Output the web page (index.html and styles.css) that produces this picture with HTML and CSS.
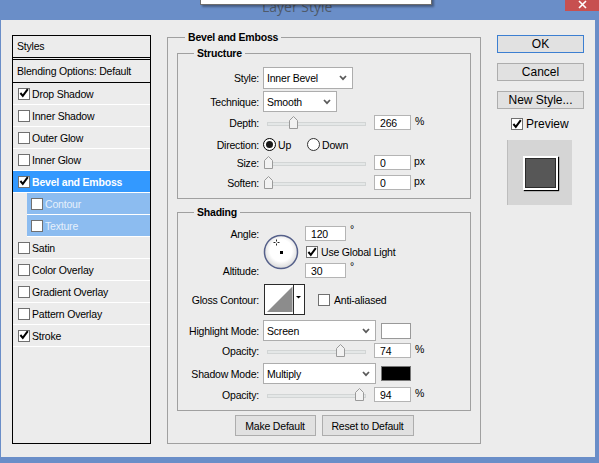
FILE: index.html
```html
<!DOCTYPE html>
<html>
<head>
    <meta charset="utf-8">
    <title>Layer Style</title>
    <link rel="stylesheet" href="styles.css">
</head>
<body>
    <!-- Title bar -->
    <div class="titlebar">
        <span class="title">Layer Style</span>
        <div class="tip"></div>
        <div class="close">
            <svg width="9" height="9" viewBox="0 0 9 9"><path d="M1 1 L8 8 M8 1 L1 8" stroke="#fff" stroke-width="1.6"/></svg>
        </div>
    </div>

    <div class="dialog">
        <!-- Styles list -->
        <div class="styles-list">
            <div class="list-head">Styles</div>
            <div class="list-blend">Blending Options: Default</div>
            <div class="list-item"><span class="chk"><svg viewBox="0 0 10 10"><path d="M1.4 5 L3.8 7.8 L8.8 1.2"/></svg></span>Drop Shadow</div>
            <div class="list-item"><span class="chk"></span>Inner Shadow</div>
            <div class="list-item"><span class="chk"></span>Outer Glow</div>
            <div class="list-item"><span class="chk"></span>Inner Glow</div>
            <div class="list-item active"><span class="chk"><svg viewBox="0 0 10 10"><path d="M1.4 5 L3.8 7.8 L8.8 1.2"/></svg></span>Bevel and Emboss</div>
            <div class="list-item sub"><span class="chk"></span>Contour</div>
            <div class="list-item sub"><span class="chk"></span>Texture</div>
            <div class="list-item"><span class="chk"></span>Satin</div>
            <div class="list-item"><span class="chk"></span>Color Overlay</div>
            <div class="list-item"><span class="chk"></span>Gradient Overlay</div>
            <div class="list-item"><span class="chk"></span>Pattern Overlay</div>
            <div class="list-item"><span class="chk"><svg viewBox="0 0 10 10"><path d="M1.4 5 L3.8 7.8 L8.8 1.2"/></svg></span>Stroke</div>
        </div>

        <!-- Bevel and Emboss settings -->
        <fieldset class="group">
            <legend>Bevel and Emboss</legend>

            <fieldset class="sub-group structure">
                <legend>Structure</legend>
                <div class="row r-style">
                    <span class="lbl">Style:</span>
                    <div class="select w-style"><span>Inner Bevel</span><svg width="8" height="6" viewBox="0 0 8 6"><path d="M1 1 L4 4.2 L7 1"/></svg></div>
                </div>
                <div class="row r-tech">
                    <span class="lbl">Technique:</span>
                    <div class="select w-tech"><span>Smooth</span><svg width="8" height="6" viewBox="0 0 8 6"><path d="M1 1 L4 4.2 L7 1"/></svg></div>
                </div>
                <div class="row r-depth">
                    <span class="lbl">Depth:</span>
                    <div class="slider"><div class="track"></div><svg class="thumb" style="left: 26px" width="9" height="13" viewBox="0 0 9 13"><path d="M0.5 4.5 L4.5 0.5 L8.5 4.5 V12.5 H0.5 Z"/></svg></div>
                    <div class="num">266</div><span class="unit">%</span>
                </div>
                <div class="row r-dir">
                    <span class="lbl">Direction:</span>
                    <span class="opt"><span class="radio on"><span class="dot"></span></span>Up</span>
                    <span class="opt"><span class="radio"></span>Down</span>
                </div>
                <div class="row r-size">
                    <span class="lbl">Size:</span>
                    <div class="slider"><div class="track"></div><svg class="thumb" style="left: 1px" width="9" height="13" viewBox="0 0 9 13"><path d="M0.5 4.5 L4.5 0.5 L8.5 4.5 V12.5 H0.5 Z"/></svg></div>
                    <div class="num">0</div><span class="unit px">px</span>
                </div>
                <div class="row r-soften">
                    <span class="lbl">Soften:</span>
                    <div class="slider"><div class="track"></div><svg class="thumb" style="left: 1px" width="9" height="13" viewBox="0 0 9 13"><path d="M0.5 4.5 L4.5 0.5 L8.5 4.5 V12.5 H0.5 Z"/></svg></div>
                    <div class="num">0</div><span class="unit px">px</span>
                </div>
            </fieldset>

            <fieldset class="sub-group shading">
                <legend>Shading</legend>
                <div class="angle">
                    <span class="lbl a-lbl1">Angle:</span>
                    <svg class="dial" width="36" height="36" viewBox="0 0 36 36">
                        <defs>
                            <radialGradient id="dialFill" cx="50%" cy="45%" r="55%">
                                <stop offset="0.6" stop-color="#ffffff"/>
                                <stop offset="1" stop-color="#d8d8d8"/>
                            </radialGradient>
                        </defs>
                        <circle cx="18" cy="18" r="16.5" fill="url(#dialFill)" stroke="#55608a" stroke-width="1.5"/>
                        <path d="M13.5 5.5 V7.5 M13.5 9.5 V11.5 M10.5 8.5 H12.5 M14.5 8.5 H16.5" stroke="#222" stroke-width="1"/>
                        <rect x="17" y="17" width="3" height="3" fill="#000"/>
                    </svg>
                    <div class="a-val1"><div class="num w-angle">120</div><span class="deg">°</span></div>
                    <div class="a-glob"><span class="chk"><svg viewBox="0 0 10 10"><path d="M1.4 5 L3.8 7.8 L8.8 1.2"/></svg></span>Use Global Light</div>
                    <span class="lbl a-lbl3">Altitude:</span>
                    <div class="a-val3"><div class="num w-angle">30</div><span class="deg">°</span></div>
                </div>
                <div class="row r-gloss">
                    <span class="lbl">Gloss Contour:</span>
                    <svg class="contour" width="41" height="31" viewBox="0 0 41 31">
                        <rect x="0.5" y="0.5" width="40" height="30" fill="#fff" stroke="#2b2b2b"/>
                        <polygon points="3,28 28.5,2.5 28.5,28" fill="#8c8c8c"/>
                        <path d="M29.5 1 V30" stroke="#2b2b2b"/>
                        <polygon points="32,12 37,12 34.5,14.6" fill="#000"/>
                    </svg>
                    <span class="chk anti"></span>Anti-aliased
                </div>
                <div class="row r-hmode">
                    <span class="lbl">Highlight Mode:</span>
                    <div class="select w-mode"><span>Screen</span><svg width="8" height="6" viewBox="0 0 8 6"><path d="M1 1 L4 4.2 L7 1"/></svg></div>
                    <span class="swatch white"></span>
                </div>
                <div class="row r-hop">
                    <span class="lbl">Opacity:</span>
                    <div class="slider"><div class="track"></div><svg class="thumb" style="left: 73px" width="9" height="13" viewBox="0 0 9 13"><path d="M0.5 4.5 L4.5 0.5 L8.5 4.5 V12.5 H0.5 Z"/></svg></div>
                    <div class="num">74</div><span class="unit">%</span>
                </div>
                <div class="row r-smode">
                    <span class="lbl">Shadow Mode:</span>
                    <div class="select w-mode"><span>Multiply</span><svg width="8" height="6" viewBox="0 0 8 6"><path d="M1 1 L4 4.2 L7 1"/></svg></div>
                    <span class="swatch black"></span>
                </div>
                <div class="row r-sop">
                    <span class="lbl">Opacity:</span>
                    <div class="slider"><div class="track"></div><svg class="thumb" style="left: 92px" width="9" height="13" viewBox="0 0 9 13"><path d="M0.5 4.5 L4.5 0.5 L8.5 4.5 V12.5 H0.5 Z"/></svg></div>
                    <div class="num">94</div><span class="unit">%</span>
                </div>
            </fieldset>

            <div class="defaults">
                <button class="btn-sm make">Make Default</button>
                <button class="btn-sm reset">Reset to Default</button>
            </div>
        </fieldset>

        <!-- Dialog buttons -->
        <div class="actions">
            <button class="btn ok">OK</button>
            <button class="btn">Cancel</button>
            <button class="btn">New Style...</button>
            <div class="preview-check"><span class="chk"><svg viewBox="0 0 10 10"><path d="M1.4 5 L3.8 7.8 L8.8 1.2"/></svg></span>Preview</div>
            <div class="preview-box"><div class="preview-square"></div></div>
        </div>
    </div>
</body>
</html>
```

FILE: styles.css
```css
* {
    box-sizing: border-box;
}

body {
    margin: 0;
    width: 599px;
    height: 463px;
    overflow: hidden;
    background: #6a8ec8;
    font-family: "Liberation Sans", Arial, sans-serif;
    font-size: 10.5px;
    letter-spacing: -0.2px;
    color: #000;
}

/* Title bar */
.titlebar {
    position: relative;
    height: 20px;
    display: flex;
    align-items: flex-start;
}

.title {
    margin-left: 262px;
    font-family: "Open Sans", sans-serif;
    font-size: 14px;
    line-height: 14px;
    letter-spacing: 0;
    color: #4f5a6a;
}

.tip {
    position: absolute;
    left: 200px;
    top: -5px;
    width: 232px;
    height: 10px;
    background: #fff;
    border: 1px solid #6d6d6d;
    box-shadow: 2px 2px 2px rgba(0, 0, 0, 0.35);
}

.close {
    margin-left: auto;
    width: 34px;
    height: 11px;
    background: #c75050;
    display: flex;
    justify-content: center;
    align-items: flex-end;
    padding-bottom: 2px;
}

/* Dialog body */
.dialog {
    margin-left: 1px;
    width: 594px;
    height: 437px;
    background: #ececec;
    display: flex;
    align-items: flex-start;
}

/* Checkboxes */
.chk {
    width: 12px;
    height: 12px;
    flex: none;
    border: 1px solid #707070;
    background: #fff;
    display: flex;
    align-items: center;
    justify-content: center;
    margin-right: 2px;
}

.chk svg {
    width: 10px;
    height: 10px;
    margin-top: -1px;
}

.chk path {
    fill: none;
    stroke: #000;
    stroke-width: 2;
}

/* Styles list */
.styles-list {
    margin: 15px 0 0 11px;
    width: 139px;
    height: 409px;
    border: 1px solid #000;
}

.list-head {
    height: 24px;
    line-height: 21px;
    padding-left: 4px;
    border-bottom: 3px double #000;
}

.list-blend {
    height: 23px;
    line-height: 22px;
    padding-left: 4px;
    border-bottom: 1px solid #000;
}

.list-item {
    height: 22px;
    display: flex;
    align-items: center;
    padding-left: 5px;
    border-bottom: 1px solid #fff;
}

.list-item.active {
    background: #3399ff;
    color: #fff;
    font-weight: bold;
}

.list-item.sub {
    margin-left: 14px;
    padding-left: 4px;
    background: #8cbcf0;
    color: #e6f0fb;
}

/* Fieldsets */
fieldset {
    margin: 0;
    min-width: 0;
}

legend {
    padding: 0 3px;
    font-weight: bold;
    line-height: 14px;
}

.group {
    margin: 10px 0 0 16px;
    width: 314px;
    padding: 2px 9px 7px;
    border: 1px solid #a0a0a0;
}

.group > legend {
    margin-left: 8px;
}

.sub-group {
    padding: 0 0 8px;
    border: 1px solid #a0a0a0;
}

.sub-group > legend {
    margin-left: 16px;
}

.shading {
    margin-top: 6px;
    padding-bottom: 8px;
}

.row {
    display: flex;
    align-items: center;
}

.lbl {
    width: 81px;
    margin-right: 4px;
    flex: none;
    text-align: right;
}

/* Selects */
.select {
    display: flex;
    align-items: center;
    justify-content: space-between;
    height: 22px;
    padding: 0 5px 0 3px;
    background: #fff;
    border: 1px solid #adadad;
}

.select path {
    fill: none;
    stroke: #5a5a5a;
    stroke-width: 1.7;
}

.w-style { width: 90px; }
.w-tech { width: 74px; height: 21px; }
.w-mode { width: 113px; height: 21px; }

/* Sliders */
.slider {
    position: relative;
    width: 104px;
    height: 15px;
    flex: none;
}

.track {
    margin: 7px 0 0 4px;
    width: 99px;
    height: 4px;
    background: #e4e7e7;
    border: 1px solid #d2d5d5;
}

.thumb {
    position: absolute;
    top: 1px;
}

.thumb path {
    fill: #f2f2f2;
    stroke: #9a9a9a;
}

/* Number fields */
.num {
    width: 37px;
    height: 15px;
    margin-left: 7px;
    padding-left: 5px;
    line-height: 14px;
    background: #fff;
    border: 1px solid #b4b4b4;
}

.unit {
    margin-left: 4px;
    align-self: flex-start;
    line-height: 12px;
}

.unit.px {
    margin-left: 3px;
}

/* Structure rows */
.r-style { margin-top: 7px; }
.r-tech { margin-top: 2px; }
.r-depth { margin-top: 3px; }
.r-dir { margin-top: 8px; }
.r-size { margin-top: 4px; }
.r-soften { margin-top: 5px; }

.opt {
    display: flex;
    align-items: center;
    margin-right: 16px;
}

.radio {
    width: 13px;
    height: 13px;
    margin-right: 2px;
    border-radius: 50%;
    border: 1px solid #333;
    background: #fff;
    display: flex;
    align-items: center;
    justify-content: center;
}

.radio.on {
    border-color: #000;
}

.dot {
    width: 7px;
    height: 7px;
    border-radius: 50%;
    background: #1a1a1a;
}

/* Shading: angle block */
.angle {
    display: grid;
    grid-template-columns: 85px 42px auto;
    grid-template-rows: 19px 18px 19px;
    margin-top: 5px;
}

.angle .lbl {
    margin-right: 0;
    padding-right: 4px;
    width: 85px;
    align-self: center;
}

.a-lbl1 { grid-column: 1; grid-row: 1; }
.a-lbl3 { grid-column: 1; grid-row: 3; }

.dial {
    grid-column: 2;
    grid-row: 1 / 4;
    align-self: center;
    margin-left: 0;
}

.a-val1, .a-val3, .a-glob {
    grid-column: 3;
    display: flex;
    align-items: center;
}

.a-val1 { grid-row: 1; }
.a-glob { grid-row: 2; padding-left: 1px; }
.a-val3 { grid-row: 3; }

.a-glob .chk {
    margin-right: 3px;
}

.w-angle {
    width: 41px;
    margin-left: 0;
}

.deg {
    margin-left: 4px;
    align-self: flex-start;
    line-height: 10px;
}

/* Gloss contour */
.r-gloss {
    margin-top: 4px;
}

.contour {
    margin-left: 1px;
}

.chk.anti {
    margin-left: 13px;
    margin-right: 4px;
}

/* Modes */
.r-hmode { margin-top: 5px; }
.r-hop { margin-top: 2px; }
.r-smode { margin-top: 5px; }
.r-sop { margin-top: 3px; }

.swatch {
    width: 30px;
    height: 16px;
    margin-left: 5px;
    border: 1px solid #999;
}

.swatch.white { background: #fff; }
.swatch.black { background: #000; height: 15px; border-color: #777; }

/* Default buttons */
.defaults {
    display: flex;
    justify-content: center;
    gap: 6px;
    margin-top: 4px;
}

.btn-sm {
    height: 21px;
    padding: 0;
    font-family: inherit;
    font-size: 10.5px;
    letter-spacing: -0.2px;
    background: #e1e1e1;
    border: 1px solid #adadad;
}

.make { width: 81px; }
.reset { width: 92px; }

/* Right column */
.actions {
    margin: 15px 0 0 16px;
    width: 87px;
    display: flex;
    flex-direction: column;
}

.btn {
    height: 18px;
    margin-bottom: 10px;
    padding: 0;
    font-family: inherit;
    font-size: 12px;
    letter-spacing: 0;
    line-height: 16px;
    background: #e1e1e1;
    border: 1px solid #adadad;
}

.btn.ok {
    border-color: #3c7fd1;
}

.preview-check {
    display: flex;
    align-items: center;
    margin: -2px 0 0 14px;
    font-size: 12px;
    letter-spacing: 0;
}

.preview-check .chk {
    margin-right: 3px;
}

.preview-box {
    margin: 9px 0 0 10px;
    width: 65px;
    height: 65px;
    background: #d5d5d5;
    border-left: 1px solid #bdbdbd;
    display: flex;
    align-items: center;
    justify-content: center;
}

.preview-square {
    width: 35px;
    height: 34px;
    background: #575757;
    border: 2px solid #fff;
    box-shadow: inset 0 0 0 1px #2a2a2a, 1px 1px 1px #000;
}
```
